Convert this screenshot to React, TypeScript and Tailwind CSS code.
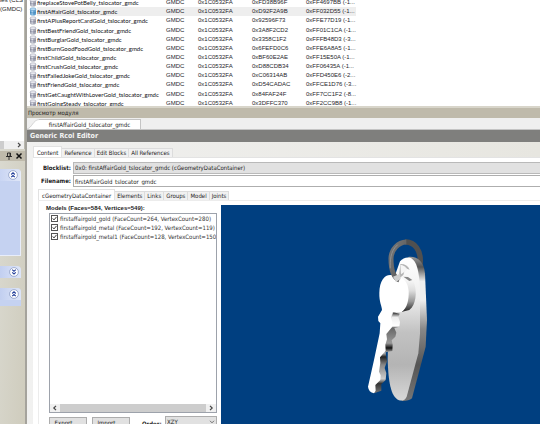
import React from "react";

const rows: [string, string, string][] = [
  ["fireplaceStovePotBelly_tslocator_gmdc", "0xFD38B96F", "0xFF4697BB (-1..."],
  ["firstAffairGold_tslocator_gmdc", "0xD92F2A9B", "0xFF032D55 (-1..."],
  ["firstAPlusReportCardGold_tslocator_gmdc", "0x92596F73", "0xFFE77D19 (-1..."],
  ["firstBestFriendGold_tslocator_gmdc", "0x3A8F2CD2", "0xFF01C1CA (-1..."],
  ["firstBurglarGold_tslocator_gmdc", "0x3358C1F2", "0xFFFB48D3 (-3..."],
  ["firstBurnGoodFoodGold_tslocator_gmdc", "0x6FEFD0C6", "0xFFE6A8A5 (-1..."],
  ["firstChildGold_tslocator_gmdc", "0xBF60E2AE", "0xFF15E50A (-1..."],
  ["firstCrushGold_tslocator_gmdc", "0xD88CDB34", "0xFF06435A (-1..."],
  ["firstFailedJokeGold_tslocator_gmdc", "0xC06314AB", "0xFFD450E6 (-2..."],
  ["firstFriendGold_tslocator_gmdc", "0xD54CADAC", "0xFFCE1D76 (-3..."],
  ["firstGetCaughtWithLoverGold_tslocator_gmdc", "0x84FAF24F", "0xFF7CC1F2 (-8..."],
  ["firstGoingSteady_tslocator_gmdc", "0x3DFFC370", "0xFF2CC9B8 (-1..."],
];

const models = [
  "firstaffairgold_gold (FaceCount=264, VertexCount=280)",
  "firstaffairgold_metal (FaceCount=192, VertexCount=119)",
  "firstaffairgold_metal1 (FaceCount=128, VertexCount=150)",
];

function DbIcon({ active }: { active: boolean }) {
  return (
    <svg viewBox="0 0 8 9" className="block h-[9px] w-2">
      <path d="M1 2v5c0 2 6 2 6 0V2z" fill={active ? "#5c9ed0" : "#a4a6b4"} />
      <path d="M2.4 3v4.6h1.8V3z" fill={active ? "#a9d0ee" : "#dedfe8"} />
      <ellipse cx="4" cy="2.2" rx="3" ry="1.4" fill={active ? "#b8daf2" : "#e9e9f0"} stroke={active ? "#5590bf" : "#9496a6"} strokeWidth=".5" />
      <path d="M1 5c1 1.3 5 1.3 6 0" fill="none" stroke={active ? "#397eb2" : "#777a90"} strokeWidth=".7" />
    </svg>
  );
}

function Chevron({ down }: { down?: boolean }) {
  return (
    <button aria-label={down ? "Expand" : "Collapse"} className="block size-[10px] shrink-0">
      <svg viewBox="0 0 10 10" className="block size-full">
        <circle cx="5" cy="5" r="4.4" fill="#fff" stroke="#8c9cc4" strokeWidth=".8" />
        <path d={down ? "M3.2 2.6 5 4.3l1.8-1.7M3.2 5.3 5 7l1.8-1.7" : "M3.2 4.5 5 2.8l1.8 1.7M3.2 7.2 5 5.5l1.8 1.7"} fill="none" stroke="#25409a" strokeWidth="1.1" />
      </svg>
    </button>
  );
}

function Arrow({ left }: { left?: boolean }) {
  return (
    <svg viewBox="0 0 10 8" className="block h-2 w-[10px] shrink-0 bg-[#f0f0f0]">
      <path d={left ? "M6 1.8 3.8 4 6 6.2" : "M4 1.8 6.2 4 4 6.2"} fill="none" stroke="#444" strokeWidth="1.2" />
    </svg>
  );
}

function Sidebar() {
  return (
    <aside className="flex w-[27px] shrink-0 flex-col border-r-2 border-[#a5a39c] bg-linear-to-br from-[#dcdcd4] to-[#cfccbd]">
      <div className="flex h-[149px] flex-col justify-between overflow-hidden border-r border-[#b9b7ad] bg-white whitespace-nowrap">
        <div className="flex flex-col items-start font-['Liberation_Sans',sans-serif] leading-[9px]">
          <span className="-mt-1">les (CLST</span>
          <span>(GMDC) (</span>
        </div>
        <div className="flex h-2 bg-[#cdcdcd] pl-[4px]">
          <span className="flex-1 bg-[#f0f0f0]" />
          <Arrow />
        </div>
      </div>
      <div className="mt-0.5 flex h-[10px] items-center justify-end gap-0.5 bg-[#bfbaab] pr-0.5">
        <svg viewBox="0 0 8 8" className="size-2">
          <path d="M2.5 1h3v3.5h-3zM1 4.5h6M4 4.5V8M5 1v3" fill="none" stroke="#222" strokeWidth=".9" />
        </svg>
        <svg viewBox="0 0 8 8" className="size-2">
          <path d="m1.5 1.5 5 5m0-5-5 5" stroke="#111" strokeWidth="1.5" />
        </svg>
      </div>
      <div className="mt-2 mr-1 flex h-[87px] flex-col rounded-tr-sm border-r border-b border-[#e8edfa] bg-[#c5d2f1]">
        <div className="flex h-3 items-center justify-end rounded-tr-sm bg-linear-to-r from-[#c9d5f3] to-[#dfe6f7] pr-0.5">
          <Chevron />
        </div>
      </div>
      <div className="mt-[10px] mr-1 flex h-3 items-center justify-end rounded-tr-sm bg-linear-to-r from-[#c2cff0] to-[#dde5f8] pr-0.5">
        <Chevron down />
      </div>
      <div className="mt-[10px] mr-1 flex h-[18px] flex-col rounded-tr-sm bg-[#c5d2f1]">
        <div className="flex h-3 items-center justify-end rounded-tr-sm bg-linear-to-r from-[#c2cff0] to-[#dde5f8] pr-0.5">
          <Chevron />
        </div>
      </div>
    </aside>
  );
}

function ResourceTable() {
  return (
    <div className="h-[106px] overflow-hidden bg-white pr-1">
      <table className="-mt-0.5 h-[110px] w-[329px] table-fixed border-collapse font-['Liberation_Sans',sans-serif] leading-[9px] whitespace-nowrap text-[#26262c]">
        <colgroup>
          <col className="w-[10px]" />
          <col className="w-[129px]" />
          <col className="w-8" />
          <col className="w-[54px]" />
          <col className="w-[54px]" />
          <col />
        </colgroup>
        <tbody>
          {rows.map(([name, instHi, inst], i) => (
            <tr key={name} className={i === 1 ? "bg-[#eeeeee]" : ""}>
              <td className="bg-white p-0 pl-0.5"><DbIcon active={i === 1} /></td>
              <td className="p-0 font-['Lato',sans-serif] text-[#101014]">{name}</td>
              <td className="p-0">GMDC</td>
              <td className="p-0">0x1C0532FA</td>
              <td className="p-0">{instHi}</td>
              <td className="p-0">{inst}</td>
            </tr>
          ))}
        </tbody>
      </table>
    </div>
  );
}

function Tabs({ items }: { items: string[] }) {
  return (
    <div role="tablist" className="flex items-end whitespace-nowrap">
      {items.map((t, i) => (
        <button
          key={t}
          role="tab"
          aria-selected={i === 0}
          className={
            i === 0
              ? "h-[11px] border border-b-0 border-[#e2e2e2] bg-white px-[3px] leading-[9px]"
              : "h-[9px] border-t border-r border-[#dcdcdc] bg-[#f1f1f1] px-0.5 leading-[8px]"
          }
        >
          {t}
        </button>
      ))}
    </div>
  );
}

function KeyModel() {
  return (
    <svg viewBox="221 205 319 219" preserveAspectRatio="xMidYMin slice" className="block size-full">
      <defs>
        <linearGradient id="face" x1="0" y1="0" x2="0" y2="1">
          <stop offset="0" stopColor="#fff" />
          <stop offset=".28" stopColor="#eee" />
          <stop offset=".52" stopColor="#c2c2c2" />
          <stop offset=".75" stopColor="#b4b4b4" />
          <stop offset="1" stopColor="#d8d8d8" />
        </linearGradient>
        <linearGradient id="edge" x1="0" y1="0" x2="0" y2="1">
          <stop offset="0" stopColor="#999" />
          <stop offset=".07" stopColor="#555" />
          <stop offset=".17" stopColor="#eee" />
          <stop offset=".3" stopColor="#eee" />
          <stop offset=".5" stopColor="#888" />
          <stop offset=".75" stopColor="#555" />
          <stop offset="1" stopColor="#777" />
        </linearGradient>
        <linearGradient id="bow" x1="0" y1="0" x2="0" y2="1">
          <stop offset="0" stopColor="#fff" />
          <stop offset=".4" stopColor="#ddd" />
          <stop offset=".7" stopColor="#999" />
          <stop offset="1" stopColor="#222" />
        </linearGradient>
        <linearGradient id="teeth" x1="0" y1="0" x2="0" y2="1">
          <stop offset="0" stopColor="#222" />
          <stop offset=".06" stopColor="#eee" />
          <stop offset=".17" stopColor="#fff" />
          <stop offset=".19" stopColor="#666" />
          <stop offset=".38" stopColor="#999" />
          <stop offset=".44" stopColor="#111" />
          <stop offset=".5" stopColor="#bbb" />
          <stop offset=".55" stopColor="#222" />
          <stop offset=".65" stopColor="#888" />
          <stop offset=".82" stopColor="#ccc" />
          <stop offset=".88" stopColor="#333" />
          <stop offset="1" stopColor="#777" />
        </linearGradient>
        <linearGradient id="ring" x1="0" y1="0" x2="1" y2="1">
          <stop offset="0" stopColor="#777" />
          <stop offset=".5" stopColor="#666" />
          <stop offset="1" stopColor="#444" />
        </linearGradient>
      </defs>
      <g transform="translate(340 220) scale(.33333)">
        <path d="M240 135C246 90 222 65 196 66" fill="none" stroke="#505050" strokeWidth="16" />
        <path d="M205 111C230 108 251 122 255 160L261 300 257 380 216 535Q205 544 185 543Z" fill="url(#edge)" />
        <path d="M180 124Q192 110 210 113C232 120 238 160 240 210L240 340 235 400 200 530Q193 545 177 541C151 530 145 480 143 420L146 300 160 180Z" fill="url(#face)" />
        <path d="M181 132Q203 132 209 149L196 145 190 165 176 176Z" fill="#b4b4b4" />
        <path d="M181 134Q194 136 203 149L183 163Z" fill="#f5f5f5" />
        <path d="M190 170Q213 168 222 188C232 215 228 255 208 270L184 276Z" fill="url(#bow)" />
        <path d="M190 170L204 171 217 180 208 183Z" fill="#888" />
        <path d="M160 277L179 281 175 292 180 306 178 320 163 324 169 338 166 350 155 361 158 374 157 393 137 397 139 413 141 424 134 444 139 459 137 480 124 493 124 512 102 520 110 450 120 400 140 330Z" fill="url(#teeth)" />
        <path d="M155 165C135 162 119 180 118 218C117 246 126 258 126 270L114 290 115 303 121 310 119 340 102 420 84 500Q86 517 102 520L107 512 106 495 121 480 122 466 117 455 121 428 120 412 137 392 136 374 141 358 139 342 157 320 157 305 153 294 157 277 185 276C202 264 207 240 206 214C204 188 194 170 155 165Z" fill="#fff" />
        <path d="M178 180C158 172 153 145 153 115C154 88 174 67 199 66" fill="none" stroke="url(#ring)" strokeWidth="15" />
        <path d="M151 145C151 125 149 95 173 74" fill="none" stroke="#a0a0a0" strokeWidth="2" />
        <path d="M159 170L168 186 182 177 180 161Z" fill="#cfcfcf" />
      </g>
    </svg>
  );
}

function GeometryPage() {
  return (
    <div className="flex min-h-0 flex-1 border-t border-l border-[#ececec] pt-1">
      <div className="w-[182px] shrink-0 pl-[7px]">
        <h2 className="h-[8px] font-['Liberation_Sans',sans-serif] font-bold leading-[6px] whitespace-nowrap">Models (Faces=584, Vertices=549):</h2>
        <div className="ml-[3px] flex h-[200px] w-[168px] flex-col justify-between overflow-hidden border border-[#9da2ab] bg-white">
          <div className="pl-px">
            {models.map((m) => (
              <label key={m} className="flex h-[9px] items-center gap-0.5 whitespace-nowrap text-[#333]">
                <span className="grid size-[7px] shrink-0">
                  <input type="checkbox" defaultChecked className="col-start-1 row-start-1 size-[7px] appearance-none border border-[#555] bg-white" />
                  <svg viewBox="0 0 7 7" className="pointer-events-none col-start-1 row-start-1 size-[7px]">
                    <path d="m1.7 3.4 1.3 1.5 2.5-3" fill="none" stroke="#222" strokeWidth=".9" />
                  </svg>
                </span>
                {m}
              </label>
            ))}
          </div>
          <div className="flex h-2 bg-[#cdcdcd]">
            <Arrow left />
            <span className="flex-1" />
            <Arrow />
          </div>
        </div>
        <div className="mt-[3px] ml-[3px] flex w-[168px] items-start">
          <button className="mt-px mr-[5px] h-3 w-[38px] border border-[#adadad] bg-[#e1e1e1] pr-1 leading-[10px]">Export...</button>
          <button className="mt-px mr-3 h-3 w-[38px] border border-[#adadad] bg-[#e1e1e1] pr-1 leading-[10px]">Import...</button>
          <label htmlFor="order" className="mt-[3px] flex-1 font-bold leading-[9px]">Order:</label>
          <span className="grid w-[52px] items-center">
            <select id="order" className="col-start-1 row-start-1 h-3 w-full appearance-none border border-[#adadad] bg-[#e1e1e1] pl-px leading-[10px]">
              <option>XZY</option>
            </select>
            <svg viewBox="0 0 6 4" className="pointer-events-none col-start-1 row-start-1 mr-0.5 h-1 w-1.5 justify-self-end">
              <path d="m1 .8 2 2 2-2" fill="none" stroke="#555" strokeWidth=".8" />
            </svg>
          </span>
        </div>
      </div>
      <div className="min-w-0 flex-1 bg-[#003f80]">
        <KeyModel />
      </div>
    </div>
  );
}

export default function App() {
  return (
    <div className="flex h-screen overflow-hidden bg-[#ecebe7] font-['DejaVu_Sans_Condensed','Liberation_Sans',sans-serif] text-[6px] text-[#1c1c1c]">
      <Sidebar />
      <main className="flex min-w-0 flex-1 flex-col">
        <ResourceTable />
        <div className="h-3 border-t-2 border-[#d8d5ca] bg-[#bfbaab] pl-px leading-[10px]">Просмотр модуля</div>
        <div className="flex h-[11px] items-end bg-[#efefef]">
          <svg viewBox="0 0 12 10" className="h-[10px] w-3">
            <path d="M0 10C5 9 6 1 12 0V10Z" fill="#fff" />
            <path d="M0 10C5 9 6 1 12 .5" fill="none" stroke="#bbb" strokeWidth=".6" />
          </svg>
          <button className="h-[10px] w-[102px] border-t border-r border-[#c4c4c4] bg-white leading-[9px]">firstAffairGold_tslocator_gmdc</button>
        </div>
        <h1 className="h-[13px] border-t border-[#c4c4c4] bg-[#7f7f7d] pl-[3px] text-[7px] font-bold leading-[12px] text-[#f4f4f4]">Generic Rcol Editor</h1>
        <section className="flex min-h-0 flex-1 flex-col bg-linear-to-r from-[#f1f1f0] to-[#e7e6e0] pt-[4px] pl-[6px]">
          <Tabs items={["Content", "Reference", "Edit Blocks", "All References"]} />
          <div className="flex min-h-0 flex-1 flex-col border-t border-[#e3e3e3] bg-white pt-1 pl-[5px]">
            <div className="grid grid-cols-[33px_1fr] items-center gap-x-0.5 gap-y-px pb-0.5">
              <label htmlFor="block" className="text-right font-bold leading-[10px]">Blocklist:</label>
              <select id="block" className="h-3 w-full appearance-none border border-r-0 border-[#b9b9b9] bg-[#e1e1e1] pl-px leading-[10px]">
                <option>0x0: firstAffairGold_tslocator_gmdc (cGeometryDataContainer)</option>
              </select>
              <label htmlFor="file" className="text-right font-bold leading-[10px]">Filename:</label>
              <input id="file" defaultValue="firstAffairGold_tslocator_gmdc" className="h-3 w-full border border-r-0 border-[#aeaeae] bg-white pl-px leading-[10px]" />
            </div>
            <Tabs items={["cGeometryDataContainer", "Elements", "Links", "Groups", "Model", "Joints"]} />
            <GeometryPage />
          </div>
        </section>
      </main>
    </div>
  );
}
